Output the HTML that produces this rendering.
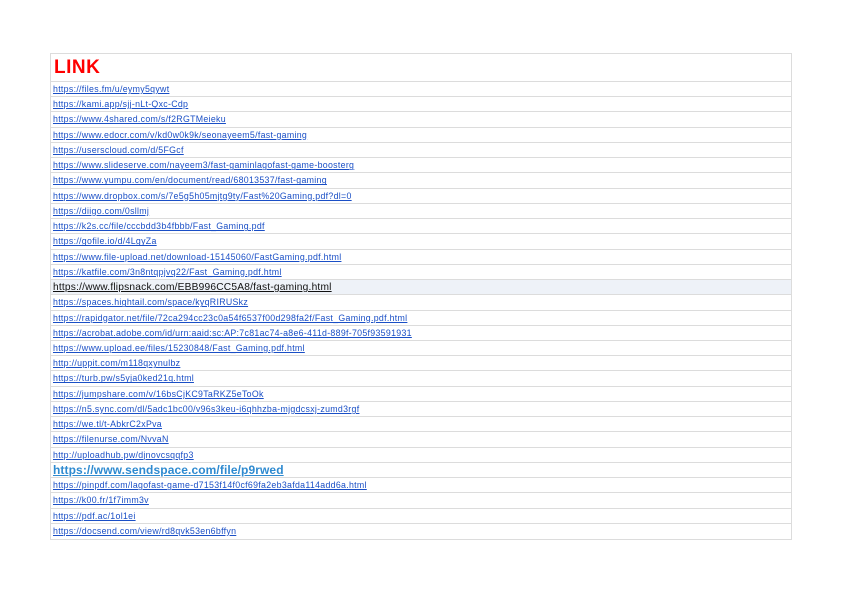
<!DOCTYPE html>
<html><head><meta charset="utf-8"><style>
html,body{margin:0;padding:0;background:#fff;width:842px;height:595px;overflow:hidden}
.t{position:absolute;left:50px;top:53px;width:742px;border:1px solid #dcdcdc;box-sizing:border-box;font-family:"Liberation Sans",Arial,sans-serif}
.h{height:28px;border-bottom:1px solid #dcdcdc;box-sizing:border-box;color:#f00;font-weight:bold;font-size:19px;line-height:28px;padding-left:3px;letter-spacing:0.5px}
.r{height:15.24px;border-bottom:1px solid #dcdcdc;box-sizing:border-box;font-size:8.8px;line-height:14px;padding-left:2px;white-space:nowrap;overflow:hidden}
.r:last-child{border-bottom:none}
.r a{color:#1a4fc6;text-decoration:underline;letter-spacing:0.3px}
.r.f{background:#eef2f8}
.r.f a{color:#111;font-size:10.2px;letter-spacing:0.2px}
.r.s a{color:#2e8ad0;font-size:12px;font-weight:bold;letter-spacing:0.1px}
</style></head><body>
<div class="t">
<div class="h">LINK</div>
<div class="r"><a>https://files.fm/u/eymy5qywt</a></div>
<div class="r"><a>https://kami.app/sjj-nLt-Qxc-Cdp</a></div>
<div class="r"><a>https://www.4shared.com/s/f2RGTMeieku</a></div>
<div class="r"><a>https://www.edocr.com/v/kd0w0k9k/seonayeem5/fast-gaming</a></div>
<div class="r"><a>https://userscloud.com/d/5FGcf</a></div>
<div class="r"><a>https://www.slideserve.com/nayeem3/fast-gaminlagofast-game-boosterg</a></div>
<div class="r"><a>https://www.yumpu.com/en/document/read/68013537/fast-gaming</a></div>
<div class="r"><a>https://www.dropbox.com/s/7e5g5h05mjtg9ty/Fast%20Gaming.pdf?dl=0</a></div>
<div class="r"><a>https://diigo.com/0sllmj</a></div>
<div class="r"><a>https://k2s.cc/file/cccbdd3b4fbbb/Fast_Gaming.pdf</a></div>
<div class="r"><a>https://gofile.io/d/4LgyZa</a></div>
<div class="r"><a>https://www.file-upload.net/download-15145060/FastGaming.pdf.html</a></div>
<div class="r"><a>https://katfile.com/3n8ntqpjvq22/Fast_Gaming.pdf.html</a></div>
<div class="r f"><a>https://www.flipsnack.com/EBB996CC5A8/fast-gaming.html</a></div>
<div class="r"><a>https://spaces.hightail.com/space/kyqRIRUSkz</a></div>
<div class="r"><a>https://rapidgator.net/file/72ca294cc23c0a54f6537f00d298fa2f/Fast_Gaming.pdf.html</a></div>
<div class="r"><a>https://acrobat.adobe.com/id/urn:aaid:sc:AP:7c81ac74-a8e6-411d-889f-705f93591931</a></div>
<div class="r"><a>https://www.upload.ee/files/15230848/Fast_Gaming.pdf.html</a></div>
<div class="r"><a>http://uppit.com/m118qxynulbz</a></div>
<div class="r"><a>https://turb.pw/s5yja0ked21q.html</a></div>
<div class="r"><a>https://jumpshare.com/v/16bsCjKC9TaRKZ5eToOk</a></div>
<div class="r"><a>https://n5.sync.com/dl/5adc1bc00/v96s3keu-i6qhhzba-mjgdcsxj-zumd3rgf</a></div>
<div class="r"><a>https://we.tl/t-AbkrC2xPva</a></div>
<div class="r"><a>https://filenurse.com/NvvaN</a></div>
<div class="r"><a>http://uploadhub.pw/djnovcsqqfp3</a></div>
<div class="r s"><a>https://www.sendspace.com/file/p9rwed</a></div>
<div class="r"><a>https://pinpdf.com/lagofast-game-d7153f14f0cf69fa2eb3afda114add6a.html</a></div>
<div class="r"><a>https://k00.fr/1f7imm3v</a></div>
<div class="r"><a>https://pdf.ac/1ol1ei</a></div>
<div class="r"><a>https://docsend.com/view/rd8qvk53en6bffyn</a></div>
</div>
</body></html>
